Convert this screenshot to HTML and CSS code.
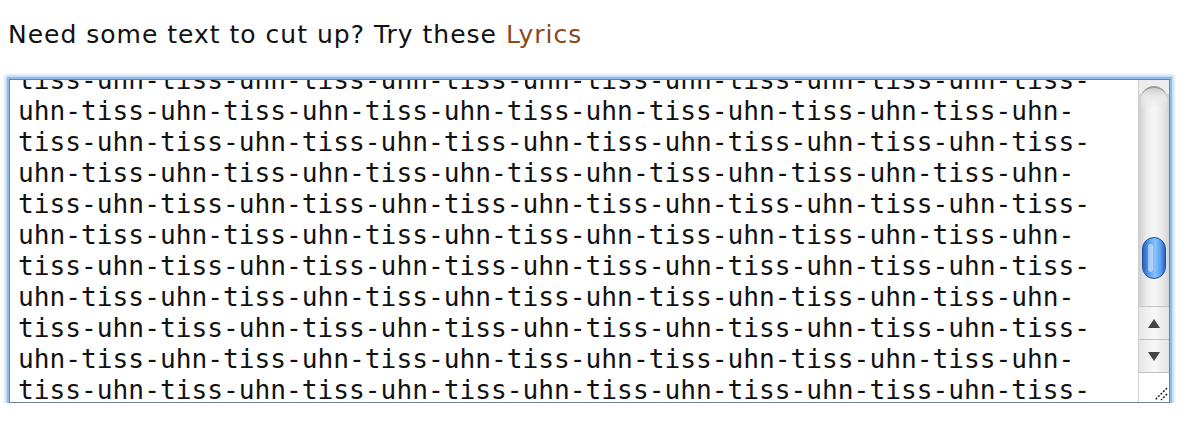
FILE: index.html
```html
<!DOCTYPE html>
<html>
<head>
<meta charset="utf-8">
<link rel="stylesheet" href="styles.css">
</head>
<body>
<p class="intro">Need some text to cut up? Try these <a class="link" href="#">Lyrics</a></p>
<div class="field">
  <div class="viewport">
    <div class="text">tiss-uhn-tiss-uhn-tiss-uhn-tiss-uhn-tiss-uhn-tiss-uhn-tiss-uhn-tiss-uhn-tiss-uhn-tiss-uhn-tiss-uhn-tiss-uhn-tiss-uhn-tiss-uhn-tiss-uhn-tiss-uhn-tiss-uhn-tiss-uhn-tiss-uhn-tiss-uhn-tiss-uhn-tiss-uhn-tiss-uhn-tiss-uhn-tiss-uhn-tiss-uhn-tiss-uhn-tiss-uhn-tiss-uhn-tiss-uhn-tiss-uhn-tiss-uhn-tiss-uhn-tiss-uhn-tiss-uhn-tiss-uhn-tiss-uhn-tiss-uhn-tiss-uhn-tiss-uhn-tiss-uhn-tiss-uhn-tiss-uhn-tiss-uhn-tiss-uhn-tiss-uhn-tiss-uhn-tiss-uhn-tiss-uhn-tiss-uhn-tiss-uhn-tiss-uhn-tiss-uhn-tiss-uhn-tiss-uhn-tiss-uhn-tiss-uhn-tiss-uhn-tiss-uhn-tiss-uhn-tiss-uhn-tiss-uhn-tiss-uhn-tiss-uhn-tiss-uhn-tiss-uhn-tiss-uhn-tiss-uhn-tiss-uhn-tiss-uhn-tiss-uhn-tiss-uhn-tiss-uhn-tiss-uhn-tiss-uhn-tiss-uhn-tiss-uhn-tiss-uhn-tiss-uhn-tiss-uhn-tiss-uhn-tiss-uhn-tiss-uhn-tiss-uhn-tiss-uhn-tiss-uhn-tiss-uhn-tiss-uhn-tiss-uhn-tiss-uhn-tiss-uhn-tiss-uhn-tiss-uhn-tiss-uhn-tiss-uhn-tiss-uhn-tiss-uhn-tiss-uhn-tiss-uhn-tiss-uhn-tiss-uhn-tiss-uhn-tiss-uhn-tiss-uhn-</div>
  </div>
  <div class="scrollbar">
    <div class="track">
      <div class="thumb"><span class="shine"></span></div>
    </div>
    <div class="btn up"><span class="tri-up"></span></div>
    <div class="btn down"><span class="tri-down"></span></div>
    <div class="corner">
      <svg class="grip" width="16" height="16" viewBox="0 0 16 16">
        <path d="M15 3 L3 15 M15 9 L9 15" stroke="#222" stroke-width="1.5" stroke-dasharray="2 1.5" fill="none"/>
      </svg>
    </div>
  </div>
</div>
</body>
</html>
```
FILE: styles.css
```css
html, body {
  margin: 0;
  padding: 0;
  background: #fff;
}

body {
  padding: 20px 0 0 8px;
}

.intro {
  margin: 0;
  font-family: "DejaVu Sans", Verdana, sans-serif;
  font-size: 25px;
  line-height: 29px;
  letter-spacing: 1px;
  color: #111;
}

.link {
  color: #8a4a1c;
  text-decoration: none;
}

.field {
  margin: 30px 0 0 1px;
  width: 1161px;
  height: 324px;
  box-sizing: border-box;
  border: 1px solid #6f8296;
  box-shadow: 0 0 0 2px #8dbbea, 0 0 3px 4px #bcd7f3;
  display: flex;
  background: #fff;
}

.viewport {
  flex: 1;
  overflow: hidden;
}

.text {
  margin-top: -15px;
  padding-left: 8px;
  width: 1100px;
  font-family: "DejaVu Sans Mono", monospace;
  font-size: 26.2px;
  line-height: 31px;
  color: #111;
  word-wrap: break-word;
}

.scrollbar {
  width: 30px;
  display: flex;
  flex-direction: column;
  border-left: 1px solid #d0d0d0;
}

.track {
  height: 227px;
  border-bottom: 1px solid #c4c4c4;
  background: linear-gradient(to right, #cfcfcf, #ececec 25%, #f7f7f7 50%, #ececec 75%, #d4d4d4);
  position: relative;
  display: flex;
  flex-direction: column;
  padding-top: 157px;
  box-sizing: border-box;
  overflow: hidden;
}

.track::before {
  content: "";
  position: absolute;
  left: 0;
  right: 0;
  top: 0;
  height: 14px;
  background: #ececec;
  border-bottom: 1px solid #d4d4d4;
}

.track::after {
  content: "";
  position: absolute;
  left: 2px;
  right: 2px;
  top: 6px;
  height: 20px;
  border-radius: 13px 13px 0 0;
  border-top: 2px solid #9a9a9a;
  background: linear-gradient(to bottom, #cfcfcf, #e8e8e8 40%, transparent);
}

.thumb {
  margin: 0 auto;
  width: 24px;
  height: 42px;
  border-radius: 12px;
  box-sizing: border-box;
  border: 1px solid #1f4f9c;
  background: linear-gradient(to right, #2a62c0, #5ea1ef 30%, #8cc4fb 55%, #5a9ef0 80%, #2a62c0);
  position: relative;
}

.shine {
  position: absolute;
  left: 5px;
  top: 6px;
  width: 5px;
  height: 28px;
  border-radius: 3px;
  background: rgba(255, 255, 255, 0.45);
}

.btn {
  height: 32px;
  display: flex;
  align-items: center;
  justify-content: center;
  background: linear-gradient(to right, #e4e4e4, #f8f8f8 50%, #e4e4e4);
  border-bottom: 1px solid #bfbfbf;
}

.tri-up {
  width: 0;
  height: 0;
  border-left: 6px solid transparent;
  border-right: 6px solid transparent;
  border-bottom: 9px solid #444;
}

.tri-down {
  width: 0;
  height: 0;
  border-left: 6px solid transparent;
  border-right: 6px solid transparent;
  border-top: 9px solid #444;
}

.corner {
  flex: 1;
  background: #fff;
  display: flex;
  align-items: flex-end;
  justify-content: flex-end;
}

.grip {
  display: block;
  margin: 0 1px 1px 0;
}
```
